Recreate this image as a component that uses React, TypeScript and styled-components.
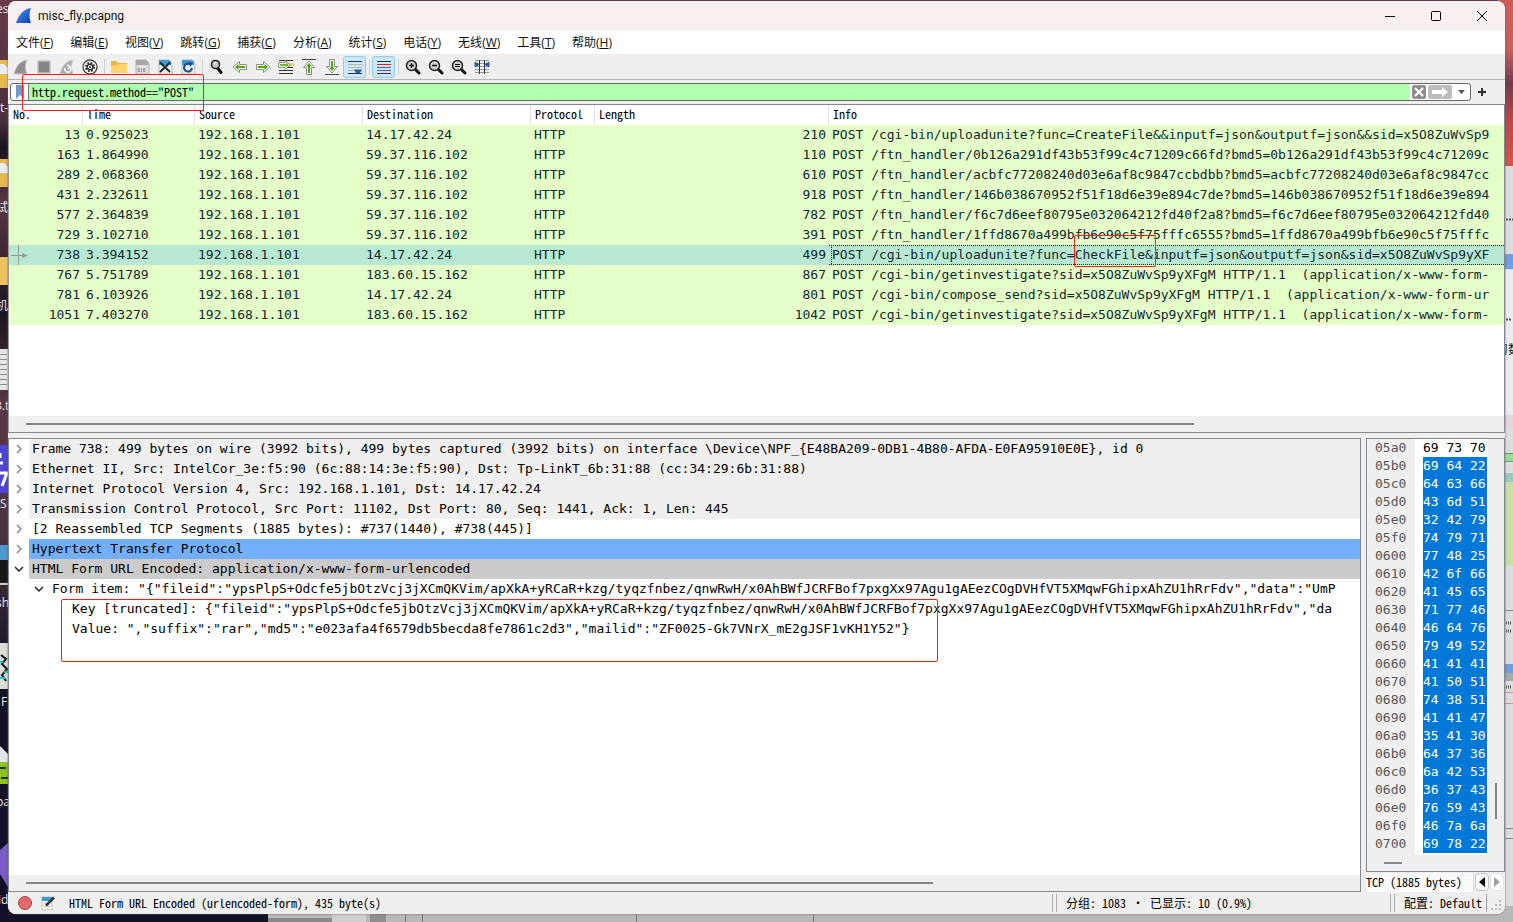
import React from "react";
import styled, { createGlobalStyle, css } from "styled-components";

const MONO = `"DejaVu Sans Mono", "Liberation Mono", monospace`;
const SMALL = `"Noto Sans Mono CJK SC", "Liberation Mono", "Noto Sans CJK SC", monospace`;
const UI = `"Open Sans", "Noto Sans CJK SC", sans-serif`;
const EDGE = "#828790";

const Global = createGlobalStyle`
  * { box-sizing: border-box; }
  body { margin: 0; background: #20182c; overflow: hidden; }
  button { font: inherit; color: inherit; background: none; border: 0; padding: 0; margin: 0; }
`;

const Desktop = styled.div`
  position: relative;
  display: flex;
  height: 100vh;
  padding: 1px 8px 8px;
  overflow: hidden;
  background: #5b3040;
`;
const LeftWallpaper = styled.svg`
  position: absolute;
  left: 0;
  top: 0;
`;
const RightWallpaper = styled.svg`
  position: absolute;
  right: 0;
  top: 0;
`;
const BottomWallpaper = styled.svg`
  position: absolute;
  left: 16px;
  bottom: 0;
`;

const Window = styled.main`
  position: relative;
  flex: 1;
  min-width: 0;
  display: flex;
  flex-direction: column;
  overflow: hidden;
  border-radius: 8px;
  background: #efefef;
  box-shadow: 0 0 2px #555;
`;

const TitleBar = styled.header`
  display: flex;
  align-items: center;
  height: 30px;
  flex: none;
  padding-left: 8px;
  background: #f8efef;
  font: 12px/16px Roboto, sans-serif;
  color: #111;
`;
const WindowTitle = styled.h1`
  flex: 1;
  margin: 0 0 0 6px;
  font: inherit;
`;
const CaptionButton = styled.button`
  display: grid;
  place-items: center;
  width: 46px;
  height: 30px;
`;

const MenuBar = styled.nav`
  display: flex;
  align-items: center;
  flex: none;
  gap: 17px;
  height: 24px;
  padding: 0 8px;
  background: #fff;
  border-bottom: 1px solid #ececec;
  font: 12px/18px ${UI};
  color: #111;
`;
const MenuButton = styled.button`
  white-space: nowrap;
`;

const ToolBar = styled.div`
  display: flex;
  align-items: center;
  flex: none;
  height: 25px;
  padding-left: 1px;
  border-bottom: 1px solid #b4b4b4;
`;
const ToolButton = styled.button<{ $on?: boolean }>`
  display: grid;
  place-items: center;
  width: 23px;
  height: 22px;
  border-radius: 3px;
  ${(p) => p.$on && css`
    background: #cce8ff;
    border: 1px solid #90c8f6;
  `}
`;
const ToolSeparator = styled.span`
  width: 6px;
  height: 16px;
  background: linear-gradient(#d0d0d0, #d0d0d0) center / 1px 100% no-repeat;
`;

const FilterBar = styled.form`
  position: relative;
  display: flex;
  align-items: center;
  flex: none;
  height: 24px;
  margin: 0;
  padding: 0 18px 0 2px;
  gap: 6px;
  font: 12px/16px ${SMALL};
`;
const FilterBox = styled.div`
  display: flex;
  flex: 1;
  align-items: center;
  height: 18px;
  border: 1px solid #666;
  border-radius: 3px;
  background: #fff;
  overflow: hidden;
`;
const BookmarkButton = styled.button`
  display: grid;
  place-items: center;
  width: 18px;
  height: 16px;
  border-right: 1px solid #777;
`;
const FilterInput = styled.input`
  flex: 1;
  min-width: 0;
  height: 16px;
  padding: 0 3px 2px;
  border: 0;
  outline: 0;
  background: #afffaf;
  font: 12px/14px ${SMALL};
  color: #000;
`;
const FilterAction = styled.button<{ $width: number; $fill?: string }>`
  display: grid;
  place-items: center;
  width: ${(p) => p.$width}px;
  height: 14px;
  margin-left: 2px;
  border-radius: 2px;
  background: ${(p) => p.$fill || "transparent"};
`;
const AddButton = styled.button`
  display: grid;
  place-items: center;
  width: 10px;
  height: 16px;
`;

const Panel = styled.section`
  position: relative;
  display: flex;
  flex-direction: column;
  min-width: 0;
  min-height: 0;
  border: 1px solid ${EDGE};
  background: #fff;
`;
const PacketPanel = styled(Panel)`
  flex: 328 1 0;
  border-left-color: #999;
`;
const PacketScroll = styled.div`
  flex: 1;
  min-height: 0;
  overflow: hidden;
`;
const PacketTable = styled.table`
  width: 100%;
  table-layout: fixed;
  border-collapse: separate;
  border-spacing: 0;
  font: 13px/19px ${MONO};
  color: #12272e;
`;
const HeaderCell = styled.th<{ $last?: boolean }>`
  height: 20px;
  padding: 0 4px;
  text-align: left;
  vertical-align: top;
  font: 12px/18px ${SMALL};
  color: #000;
  border-right: 1px solid ${(p) => (p.$last ? "#fff" : "#e2e2e2")};
`;
const PacketRow = styled.tr<{ $selected?: boolean }>`
  background: ${(p) => (p.$selected ? "#b7e8d1" : "#e4ffc7")};
`;
const Cell = styled.td<{ $right?: boolean; $focus?: boolean }>`
  position: relative;
  height: 20px;
  padding: 0 3px;
  overflow: hidden;
  vertical-align: top;
  white-space: pre;
  text-align: ${(p) => (p.$right ? "right" : "left")};
  ${(p) => p.$focus && css`
    background: repeating-linear-gradient(90deg, #222 0 1px, transparent 1px 2px) 0 0 / 100% 1px no-repeat,
      repeating-linear-gradient(90deg, #222 0 1px, transparent 1px 2px) 0 19px / 100% 1px no-repeat,
      repeating-linear-gradient(#222 0 1px, transparent 1px 2px) 2px 0 / 1px 100% no-repeat;
  `}
`;
const RelationMark = styled.svg`
  position: absolute;
  left: 0;
  top: 0;
`;

const HorizontalScroll = styled.div`
  display: flex;
  align-items: center;
  flex: none;
  height: 16px;
  padding-left: 17px;
  background: #efefef;
`;
const Thumb = styled.span<{ $share: string }>`
  width: ${(p) => p.$share};
  height: 2px;
  background: #868686;
`;

const LowerArea = styled.div`
  display: flex;
  flex: 455 1 0;
  min-height: 0;
  gap: 5px;
  margin-top: 5px;
`;
const DetailPanel = styled(Panel)`
  flex: 1;
`;
const Tree = styled.ul`
  flex: 1;
  min-height: 0;
  margin: 0;
  padding: 0;
  list-style: none;
  overflow: hidden;
  font: 13px/20px ${MONO};
  color: #000;
`;
const TreeRow = styled.li<{ $depth: number }>`
  display: flex;
  height: 20px;
  padding-left: ${(p) => p.$depth * 20}px;
`;
const Expander = styled.button`
  display: grid;
  place-items: center;
  flex: none;
  width: 20px;
  height: 20px;
`;
const TreeText = styled.span<{ $fill?: string }>`
  flex: 1;
  min-width: 0;
  padding-left: 3px;
  overflow: hidden;
  white-space: pre;
  background: ${(p) => p.$fill || "transparent"};
`;

const SideColumn = styled.div`
  display: flex;
  flex-direction: column;
  width: 139px;
  flex: none;
`;
const HexPanel = styled(Panel)`
  flex: 1;
  background: #efefef;
`;
const HexBody = styled.div`
  display: flex;
  flex: 1;
  min-height: 0;
  overflow: hidden;
  font: 13px/18px ${MONO};
`;
const HexOffsets = styled.div`
  width: 48px;
  padding-left: 8px;
  color: #555;
`;
const HexBytes = styled.div`
  width: 73px;
  height: 416px;
  padding-left: 8px;
  background: #fff;
  overflow: hidden;
`;
const HexLine = styled.div<{ $selected?: boolean }>`
  width: 64px;
  height: 18px;
  white-space: pre;
  color: ${(p) => (p.$selected ? "#fff" : "#000")};
  background: ${(p) => (p.$selected ? "#0078d7" : "transparent")};
`;
const VerticalScroll = styled.div`
  display: flex;
  flex: 1;
  justify-content: center;
  align-items: flex-end;
  padding-bottom: 36px;
`;
const VerticalThumb = styled.span`
  width: 2px;
  height: 36px;
  background: #868686;
`;
const SourceTabs = styled.div`
  display: flex;
  align-items: center;
  height: 20px;
  font: 12px/18px ${SMALL};
`;
const SourceTab = styled.button`
  width: 108px;
  height: 19px;
  background: #f9f9f9;
  border-right: 1px solid #ddd;
  text-align: left;
  white-space: pre;
`;
const TabArrow = styled.button<{ $dim?: boolean }>`
  display: grid;
  place-items: center;
  width: 14px;
  height: 18px;
  margin-left: 1px;
  border: 1px solid ${(p) => (p.$dim ? "#e2e2e2" : "#c4c4c4")};
  border-radius: 4px;
  background: #fcfcfc;
  color: ${(p) => (p.$dim ? "#a0a0a0" : "#000")};
`;

const StatusBar = styled.footer`
  display: flex;
  align-items: center;
  flex: none;
  height: 22px;
  padding: 0 1px 0 9px;
  background: #efefef;
  font: 12px/18px ${SMALL};
  color: #000;
`;
const StatusButton = styled.button`
  display: grid;
  place-items: center;
  width: 16px;
  height: 18px;
  margin-right: 7px;
`;
const StatusText = styled.span`
  flex: 1;
  padding-left: 6px;
`;
const StatusBlock = styled.span<{ $width: number }>`
  width: ${(p) => p.$width}px;
  padding-left: 9px;
  border-left: 1px solid #aaa;
  margin-left: 3px;
  white-space: pre;
`;
const StatusRule = styled.span`
  width: 1px;
  height: 18px;
  background: #aaa;
`;

const Highlight = styled.span<{ $x: number; $y: number; $w: number; $h: number }>`
  position: absolute;
  z-index: 2;
  left: ${(p) => p.$x}px;
  top: ${(p) => p.$y}px;
  width: ${(p) => p.$w}px;
  height: ${(p) => p.$h}px;
  border: 1px solid #ff1e12;
  border-radius: 2px;
  pointer-events: none;
`;

const Icon = ({ children, size = 16 }: { children: React.ReactNode; size?: number }) => (
  <svg width={size} height={size} viewBox="0 0 16 16" fill="none" aria-hidden="true">{children}</svg>
);

const FIN = "M1 15 C3 7 7 2 14 1 C12 6 12 10 14 15 Z";

const GreenArrow = ({ turn = 0 }: { turn?: number }) => (
  <g transform={`rotate(${turn} 8 8)`}>
    <path d="M1.500 5.500 H8.500 V2.500 L15 8 L8.500 13.500 V10.500 H1.500 Z" fill="#fff" stroke="#8c8c8c" strokeLinejoin="round" />
    <path d="M3 7 H9.500 V5 L13 8 L9.500 11 V9 H3 Z" fill="#4ea80c" />
  </g>
);
const Page = () => (
  <>
    <path d="M2 1 H12 L15 4 V15 H2 Z" fill="#e9ece6" stroke="#b9bdb5" />
    <path d="M2 1 H12 L14 3 V6 H2 Z" fill="#3b9bd4" />
  </>
);
const Lens = ({ children }: { children: React.ReactNode }) => (
  <>
    <path d="M10.500 10.500 L14 14" stroke="#111" strokeWidth="3" strokeLinecap="round" />
    <circle cx="6.500" cy="6.500" r="5" fill="#cfcfcf" stroke="#222" strokeWidth="1.500" />
    {children}
  </>
);

const toolGroups: { label: string; on?: boolean; art: React.ReactNode }[][] = [
  [
    { label: "开始捕获", art: <path d={FIN} fill="#8f8f8f" stroke="#c9c9c9" /> },
    { label: "停止捕获", art: <rect x="2" y="2" width="12" height="12" fill="#848484" stroke="#c2c2c2" strokeWidth="1.500" /> },
    { label: "重新捕获", art: <><path d={FIN} fill="#aaa" stroke="#ccc" /><path d="M6 9 a3 3 0 1 0 5 -1 M8 6 L11 7.500 L9 10" stroke="#f4f4f4" strokeWidth="1.600" /></> },
    { label: "捕获选项", art: <><circle cx="8" cy="8" r="7" fill="#fff" stroke="#444" strokeWidth="1.300" /><circle cx="8" cy="8" r="3.500" fill="#333" /><circle cx="8" cy="8" r="4.200" stroke="#333" strokeWidth="1.800" strokeDasharray="1.900 1.400" /><circle cx="8" cy="8" r="2.100" fill="#fff" /><circle cx="8" cy="8" r="1.100" fill="#333" /></> },
  ],
  [
    { label: "打开", art: <><path d="M0 14 V2 H5 L7 4 H16 V14 Z" fill="#efb73e" /><path d="M0 14 V6.500 H6 L8 5 H16 V14 Z" fill="#ffd56b" /></> },
    { label: "保存", art: <><path d="M2 1 H12 L15 4 V15 H2 Z" fill="#e0e0e0" stroke="#b0b0b0" /><path d="M2 1 H12 L14 3 V6 H2 Z" fill="#a6a6a6" /><path d="M4 9.500 h1.500 v3 h-1.500 Z M7.500 9 V13 M9.500 9.500 h1.500 v3 h-1.500 Z" stroke="#999" /></> },
    { label: "关闭文件", art: <><Page /><path d="M3 3.500 L13 13 M13 3.500 L3 13" stroke="#202a30" strokeWidth="2" /></> },
    { label: "重新加载", art: <><Page /><path d="M12 9 A4 4 0 1 1 10 5" stroke="#174b8c" strokeWidth="2" /><path d="M8.500 2.500 L13 4 L10 8 Z" fill="#174b8c" /></> },
  ],
  [
    { label: "查找分组", art: <><path d="M8.500 9 L12 13.500" stroke="#111" strokeWidth="3" strokeLinecap="round" /><circle cx="6.500" cy="5.500" r="4" fill="#c9c9c9" stroke="#222" strokeWidth="1.600" /><path d="M5 4.500 L7 3.500" stroke="#fff" /></> },
    { label: "上一分组", art: <GreenArrow turn={180} /> },
    { label: "下一分组", art: <GreenArrow /> },
    { label: "转到分组", art: <><path d="M1 1.500 H15 M1 11.500 H15 M1 14.500 H15 M8 8.500 H15" stroke="#333" /><path d="M11 5.500 H16" stroke="#f7d64d" strokeWidth="3" /><path d="M.5 3.500 H7 V1.500 L12.500 6 L7 10.500 V8.500 H.5 Z" fill="#fff" stroke="#8a8a8a" /><path d="M2 5 H8 V3.500 L11 6 L8 8.500 V7 H2 Z" fill="#6dba2c" /></> },
    { label: "首个分组", art: <><path d="M1 .5 H15" stroke="#444" /><g transform="translate(0 1)"><GreenArrow turn={-90} /></g></> },
    { label: "最后分组", art: <><path d="M1 15.500 H15" stroke="#444" /><g transform="translate(0 -1)"><GreenArrow turn={90} /></g></> },
    { label: "自动滚动", on: true, art: <><path d="M1 2.500 H15 M1 14.500 H15" stroke="#333" /><path d="M1 5.500 H15 M1 8.500 H15 M1 11.500 H8" stroke="#b9b9a8" /><path d="M7 10.500 H15 L13 14 H9 Z" fill="#2d5e9e" /></> },
  ],
  [
    { label: "着色", on: true, art: <><path d="M1 2.500 H15 M1 14.500 H15" stroke="#333" /><path d="M1 5.500 H15" stroke="#f01810" /><path d="M1 8.500 H15" stroke="#3465a4" /><path d="M1 11.500 H15" stroke="#75507b" /></> },
  ],
  [
    { label: "放大", art: <Lens><path d="M4 6.500 H9 M6.500 4 V9" stroke="#111" strokeWidth="1.300" /></Lens> },
    { label: "缩小", art: <Lens><path d="M4 6.500 H9" stroke="#111" strokeWidth="1.300" /></Lens> },
    { label: "正常大小", art: <Lens><path d="M4 5.500 H9 M4 7.500 H9" stroke="#111" /></Lens> },
    { label: "调整列宽", art: <><path d="M1 1.500 H15 M1 4.500 H15 M1 7.500 H15 M1 10.500 H15 M1 13.500 H15" stroke="#9a9a9a" /><path d="M5.500 1 V15 M10.500 1 V15" stroke="#333" /><path d="M1 3 L5 5.500 L1 8 Z M15 3 L11 5.500 L15 8 Z" fill="#2d5e9e" stroke="#2d5e9e" /></> },
  ],
];

const menus: [string, string][] = [
  ["文件", "F"], ["编辑", "E"], ["视图", "V"], ["跳转", "G"], ["捕获", "C"], ["分析", "A"],
  ["统计", "S"], ["电话", "Y"], ["无线", "W"], ["工具", "T"], ["帮助", "H"],
];

const columns: [string, number | undefined][] = [
  ["No.", 74], ["Time", 112], ["Source", 168], ["Destination", 168], ["Protocol", 64], ["Length", 234], ["Info", undefined],
];

const packets: [number, string, string, number, string][] = [
  [13, "0.925023", "14.17.42.24", 210, "POST /cgi-bin/uploadunite?func=CreateFile&&inputf=json&outputf=json&&sid=x5O8ZuWvSp9"],
  [163, "1.864990", "59.37.116.102", 110, "POST /ftn_handler/0b126a291df43b53f99c4c71209c66fd?bmd5=0b126a291df43b53f99c4c71209c"],
  [289, "2.068360", "59.37.116.102", 610, "POST /ftn_handler/acbfc77208240d03e6af8c9847ccbdbb?bmd5=acbfc77208240d03e6af8c9847cc"],
  [431, "2.232611", "59.37.116.102", 918, "POST /ftn_handler/146b038670952f51f18d6e39e894c7de?bmd5=146b038670952f51f18d6e39e894"],
  [577, "2.364839", "59.37.116.102", 782, "POST /ftn_handler/f6c7d6eef80795e032064212fd40f2a8?bmd5=f6c7d6eef80795e032064212fd40"],
  [729, "3.102710", "59.37.116.102", 391, "POST /ftn_handler/1ffd8670a499bfb6e90c5f75fffc6555?bmd5=1ffd8670a499bfb6e90c5f75fffc"],
  [738, "3.394152", "14.17.42.24", 499, "POST /cgi-bin/uploadunite?func=CheckFile&inputf=json&outputf=json&sid=x5O8ZuWvSp9yXF"],
  [767, "5.751789", "183.60.15.162", 867, "POST /cgi-bin/getinvestigate?sid=x5O8ZuWvSp9yXFgM HTTP/1.1  (application/x-www-form-"],
  [781, "6.103926", "14.17.42.24", 801, "POST /cgi-bin/compose_send?sid=x5O8ZuWvSp9yXFgM HTTP/1.1  (application/x-www-form-ur"],
  [1051, "7.403270", "183.60.15.162", 1042, "POST /cgi-bin/getinvestigate?sid=x5O8ZuWvSp9yXFgM HTTP/1.1  (application/x-www-form-"],
];

const FILE_ID = `{"fileid":"ypsPlpS+Odcfe5jbOtzVcj3jXCmQKVim/apXkA+yRCaR+kzg/tyqzfnbez/qnwRwH/x0AhBWfJCRFBof7pxgXx97Agu1gAEezCOgDVHfVT5XMqwFGhipxAhZU1hRrFdv"`;

const details: { depth: number; open?: boolean; leaf?: boolean; fill?: string; text: string }[] = [
  { depth: 0, fill: "#efefef", text: "Frame 738: 499 bytes on wire (3992 bits), 499 bytes captured (3992 bits) on interface \\Device\\NPF_{E48BA209-0DB1-4B80-AFDA-E0FA95910E0E}, id 0" },
  { depth: 0, fill: "#efefef", text: "Ethernet II, Src: IntelCor_3e:f5:90 (6c:88:14:3e:f5:90), Dst: Tp-LinkT_6b:31:88 (cc:34:29:6b:31:88)" },
  { depth: 0, fill: "#efefef", text: "Internet Protocol Version 4, Src: 192.168.1.101, Dst: 14.17.42.24" },
  { depth: 0, fill: "#efefef", text: "Transmission Control Protocol, Src Port: 11102, Dst Port: 80, Seq: 1441, Ack: 1, Len: 445" },
  { depth: 0, text: "[2 Reassembled TCP Segments (1885 bytes): #737(1440), #738(445)]" },
  { depth: 0, fill: "#73affa", text: "Hypertext Transfer Protocol" },
  { depth: 0, open: true, fill: "#cbcbcb", text: "HTML Form URL Encoded: application/x-www-form-urlencoded" },
  { depth: 1, open: true, text: `Form item: "${FILE_ID},"data":"UmP` },
  { depth: 2, leaf: true, text: `Key [truncated]: ${FILE_ID},"da` },
  { depth: 2, leaf: true, text: `Value: ","suffix":"rar","md5":"e023afa4f6579db5becda8fe7861c2d3","mailid":"ZF0025-Gk7VNrX_mE2gJSF1vKH1Y52"}` },
];

const hexRows = [
  "69 73 70", "69 64 22", "64 63 66", "43 6d 51", "32 42 79", "74 79 71", "77 48 25", "42 6f 66",
  "41 45 65", "71 77 46", "46 64 76", "79 49 52", "41 41 41", "41 50 51", "74 38 51", "41 41 47",
  "35 41 30", "64 37 36", "6a 42 53", "36 37 43", "76 59 43", "46 7a 6a", "69 78 22",
];
const offsetLabel = (i: number) => (0x5a0 + i * 16).toString(16).padStart(4, "0");

const DesktopLabel = styled.text`
  font: 12px ${UI};
  fill: #e8e8ee;
`;

const Wallpaper = () => (
  <>
    <LeftWallpaper width="16" height="922" aria-hidden="true">
      <defs>
        <linearGradient id="dusk" x1="0" y1="0" x2="0" y2="1">
          <stop offset="0" stopColor="#6a3a4c" />
          <stop offset=".13" stopColor="#4b2f40" />
          <stop offset=".16" stopColor="#1c1420" />
          <stop offset=".22" stopColor="#5b3747" />
          <stop offset=".34" stopColor="#1c1420" />
          <stop offset=".44" stopColor="#5b3747" />
          <stop offset=".58" stopColor="#4b3444" />
          <stop offset=".74" stopColor="#141222" />
          <stop offset="1" stopColor="#12102a" />
        </linearGradient>
      </defs>
      <rect width="16" height="922" fill="url(#dusk)" />
      <rect y="60" width="8" height="28" fill="#e6b94f" />
      <path d="M0 64 h4 l4 4 v6 h-8 Z" fill="#e9eef2" />
      <rect y="159" width="8" height="28" fill="#e6b94f" />
      <path d="M0 163 h4 l4 4 v6 h-8 Z" fill="#e9eef2" />
      <rect y="257" width="8" height="28" fill="#ecc35e" />
      <rect y="349" width="8" height="41" fill="#e4e4e4" />
      <path d="M0 354.500 h7 M0 359.500 h7 M0 364.500 h7 M0 369.500 h7 M0 374.500 h7 M0 379.500 h7 M0 384.500 h7" stroke="#8c8c8c" />
      <rect y="445" width="8" height="48" fill="#4f46d8" />
      <path d="M0 453 v5 M0 463 h3 M0 473 h7 l-5 13" stroke="#fff" strokeWidth="3" fill="none" />
      <rect y="545" width="8" height="15" fill="#4f97cf" />
      <rect y="560" width="8" height="22" fill="#17171a" />
      <rect y="583" width="8" height="2" fill="#c9c9c9" />
      <rect y="643" width="8" height="46" fill="#dcdcd6" />
      <path d="M1 655 l5 4 l-4 5 l5 5 l-5 6 l4 6" stroke="#111" strokeWidth="2" fill="none" />
      <path d="M0 662 h3 M4 672 h4 M0 678 h5" stroke="#15c7cf" strokeWidth="2" />
      <path d="M0 746 l8 8 v8 h-8 Z" fill="#dfe5ea" />
      <rect y="762" width="8" height="22" fill="#8fc31f" />
      <path d="M0 768 h6 M1 778 h7" stroke="#15370c" strokeWidth="2" />
      <path d="M0 850 L8 843 V887 L0 874 Z" fill="#7a5bc7" />
      <DesktopLabel x="-4" y="13">es</DesktopLabel>
      <DesktopLabel x="0" y="112">t-</DesktopLabel>
      <DesktopLabel x="-4" y="212">试</DesktopLabel>
      <DesktopLabel x="-4" y="310">机</DesktopLabel>
      <DesktopLabel x="-5" y="410">3.t</DesktopLabel>
      <DesktopLabel x="0" y="508">S</DesktopLabel>
      <DesktopLabel x="-4" y="607">sh</DesktopLabel>
      <DesktopLabel x="1" y="706">F.</DesktopLabel>
      <DesktopLabel x="-4" y="806">pa</DesktopLabel>
      <DesktopLabel x="-2" y="904">id</DesktopLabel>
    </LeftWallpaper>
    <RightWallpaper width="16" height="922" aria-hidden="true">
      <defs>
        <linearGradient id="sunset" x1="0" y1="0" x2="0" y2="1">
          <stop offset="0" stopColor="#cf5a58" />
          <stop offset=".3" stopColor="#c9605f" />
          <stop offset=".5" stopColor="#6e3c50" />
          <stop offset=".7" stopColor="#b5484a" />
          <stop offset="1" stopColor="#d4574c" />
        </linearGradient>
      </defs>
      <rect width="16" height="166" fill="url(#sunset)" />
      <rect y="166" width="16" height="756" fill="#dcdcdc" />
      <rect y="254" width="16" height="15" fill="#6f9fdc" />
      <rect y="270" width="16" height="145" fill="#ececec" />
      <rect y="415" width="16" height="14" fill="#e2d6d8" />
      <path d="M0 453.500 h16 M0 461.500 h16 M0 610.500 h16 M0 828.500 h16 M0 838.500 h16" stroke="#888" />
      <rect y="454" width="16" height="7" fill="#93e093" />
      <rect y="473" width="16" height="9" fill="#9dcab9" />
      <rect y="482" width="16" height="84" fill="#c8dfa8" />
      <rect y="664" width="16" height="9" fill="#6f9fdc" />
      <rect y="673" width="16" height="8" fill="#a8a8a8" />
      <path d="M8 692.500 h8 M8 703.500 h8" stroke="#e88" />
      <path d="M9 219.500 h2 M12 219.500 h4 M9 319.500 h5" stroke="#555" strokeWidth="2" strokeDasharray="2 1" />
      <path d="M9 623 h6 M9 631 h6 M9 687 h6" stroke="#555" strokeWidth="3" strokeDasharray="1 1" />
      <text x="-1" y="354" fontFamily="Noto Sans CJK SC" fontSize="12" fill="#222">习数</text>
    </RightWallpaper>
    <BottomWallpaper width="100%" height="16" aria-hidden="true">
      <rect width="100%" height="16" fill="#b8b8b8" />
      <rect width="252" height="16" fill="#101526" />
      <path d="M252 12 h64 v4 h-64 Z" fill="#8a8a8a" />
      <path d="M316 8 h34 v8 h-34 Z" fill="#cfcfcf" />
      <path d="M354 8 h16 v8 h-16 Z" fill="#8f8f8f" />
      <path d="M389.500 8 v8 M406.500 8 v8 M620.500 8 v8 M797.500 8 v8" stroke="#777" />
    </BottomWallpaper>
  </>
);

export default function App() {
  return (
    <>
      <Global />
      <Desktop>
        <Wallpaper />
        <Window>
          <TitleBar>
            <svg width="16" height="16" viewBox="0 0 16 16" aria-hidden="true">
              <defs>
                <linearGradient id="fin" x1="0" y1="0" x2="1" y2="1">
                  <stop offset="0" stopColor="#4f97f0" />
                  <stop offset="1" stopColor="#0a3fb4" />
                </linearGradient>
              </defs>
              <path d="M0 15 C3 6 8 1 15 0 C13 5 13 10 15 15 Z" fill="url(#fin)" />
            </svg>
            <WindowTitle>misc_fly.pcapng</WindowTitle>
            <CaptionButton aria-label="最小化"><svg width="10" height="10" fill="none" stroke="#000"><path d="M0 5.500 H10" /></svg></CaptionButton>
            <CaptionButton aria-label="最大化"><svg width="10" height="10" fill="none" stroke="#000"><rect x=".5" y=".5" width="9" height="9" rx="1" /></svg></CaptionButton>
            <CaptionButton aria-label="关闭"><svg width="10" height="10" fill="none" stroke="#000"><path d="M0 0 L10 10 M10 0 L0 10" /></svg></CaptionButton>
          </TitleBar>

          <MenuBar>
            {menus.map(([name, key]) => (
              <MenuButton key={key}>{name}(<u>{key}</u>)</MenuButton>
            ))}
          </MenuBar>

          <ToolBar>
            {toolGroups.map((group, i) => (
              <React.Fragment key={i}>
                {i > 0 && <ToolSeparator />}
                {group.map((tool) => (
                  <ToolButton key={tool.label} aria-label={tool.label} $on={tool.on}><Icon>{tool.art}</Icon></ToolButton>
                ))}
              </React.Fragment>
            ))}
          </ToolBar>

          <FilterBar onSubmit={(e) => e.preventDefault()}>
            <FilterBox>
              <BookmarkButton type="button" aria-label="书签">
                <svg width="8" height="14"><path d="M0 0 H8 V14 L4 10 L0 14 Z" fill="#6f9bd1" /></svg>
              </BookmarkButton>
              <FilterInput aria-label="显示过滤器" defaultValue={'http.request.method=="POST"'} />
              <FilterAction type="button" aria-label="清除" $width={14} $fill="#8f8f8f">
                <svg width="10" height="10" stroke="#fff" strokeWidth="2"><path d="M1 1 L9 9 M9 1 L1 9" /></svg>
              </FilterAction>
              <FilterAction type="submit" aria-label="应用" $width={24} $fill="#bcbcbc">
                <svg width="16" height="10"><path d="M0 3 H10 V0 L16 5 L10 10 V7 H0 Z" fill="#fff" /></svg>
              </FilterAction>
              <FilterAction type="button" aria-label="历史" $width={16}>
                <svg width="8" height="4"><path d="M0 0 H7 L3.500 4 Z" fill="#555" /></svg>
              </FilterAction>
            </FilterBox>
            <AddButton type="button" aria-label="添加">
              <svg width="8" height="8" stroke="#333" strokeWidth="2"><path d="M4 0 V8 M0 4 H8" /></svg>
            </AddButton>
            <Highlight $x={14} $y={-6} $w={182} $h={37} />
          </FilterBar>

          <PacketPanel>
            <PacketScroll>
              <PacketTable>
                <colgroup>
                  {columns.map(([name, width]) => <col key={name} width={width} />)}
                </colgroup>
                <thead>
                  <tr>
                    {columns.map(([name, width]) => <HeaderCell key={name} $last={!width}>{name}</HeaderCell>)}
                  </tr>
                </thead>
                <tbody>
                  {packets.map(([no, time, dest, length, info]) => (
                    <PacketRow key={no} $selected={no === 738}>
                      <Cell $right>
                        {no === 738 && (
                          <RelationMark width="20" height="20" aria-hidden="true">
                            <path d="M9.500 0 V20 M2 10.500 H14" stroke="#8b9c97" />
                            <path d="M13 8 L19 10.500 L13 13 Z" fill="#8b9c97" />
                          </RelationMark>
                        )}
                        {no}
                      </Cell>
                      <Cell>{time}</Cell>
                      <Cell>192.168.1.101</Cell>
                      <Cell>{dest}</Cell>
                      <Cell>HTTP</Cell>
                      <Cell $right>{length}</Cell>
                      <Cell $focus={no === 738}>{info}</Cell>
                    </PacketRow>
                  ))}
                </tbody>
              </PacketTable>
            </PacketScroll>
            <HorizontalScroll><Thumb $share="79%" /></HorizontalScroll>
            <Highlight $x={1065} $y={130} $w={82} $h={32} />
          </PacketPanel>

          <LowerArea>
            <DetailPanel>
              <Tree>
                {details.map((row) => (
                  <TreeRow key={row.text} $depth={row.depth}>
                    <Expander as={row.leaf ? "span" : "button"} aria-label={row.leaf ? undefined : "展开"}>
                      {!row.leaf && (
                        <svg width="10" height="10" fill="none" stroke={row.open ? "#222" : "#888"} strokeWidth="1.500">
                          <path d={row.open ? "M1 3 L5 7 L9 3" : "M3 1 L7 5 L3 9"} />
                        </svg>
                      )}
                    </Expander>
                    <TreeText $fill={row.fill}>{row.text}</TreeText>
                  </TreeRow>
                ))}
              </Tree>
              <HorizontalScroll><Thumb $share="68%" /></HorizontalScroll>
              <Highlight $x={52} $y={160} $w={877} $h={63} />
            </DetailPanel>

            <SideColumn>
              <HexPanel>
                <HexBody>
                  <HexOffsets>{hexRows.map((_, i) => <div key={i}>{offsetLabel(i)}</div>)}</HexOffsets>
                  <HexBytes>{hexRows.map((bytes, i) => <HexLine key={i} $selected={i > 0}>{bytes}</HexLine>)}</HexBytes>
                  <VerticalScroll><VerticalThumb /></VerticalScroll>
                </HexBody>
                <HorizontalScroll><Thumb $share="18px" /></HorizontalScroll>
              </HexPanel>
              <SourceTabs>
                <SourceTab>TCP (1885 bytes)</SourceTab>
                <TabArrow aria-label="向左"><svg width="6" height="10"><path d="M6 0 V10 L0 5 Z" fill="currentColor" /></svg></TabArrow>
                <TabArrow aria-label="向右" $dim><svg width="6" height="10"><path d="M0 0 V10 L6 5 Z" fill="currentColor" /></svg></TabArrow>
              </SourceTabs>
            </SideColumn>
          </LowerArea>

          <StatusBar>
            <StatusButton aria-label="专家信息">
              <svg width="16" height="16"><circle cx="8" cy="8" r="6.500" fill="#e8666a" stroke="#8e4a4c" /></svg>
            </StatusButton>
            <StatusButton aria-label="注释">
              <Icon>
                <path d="M2 2 H12 V15 H2 Z" fill="#f1f1ec" stroke="#c9c9c4" />
                <path d="M2 2 H12 V6 H2 Z" fill="#3b9bd4" />
                <path d="M4 8.500 H8 M4 11.500 H10" stroke="#c9c9c4" />
                <path d="M6 10.500 L14 2.500" stroke="#333" strokeWidth="2.500" />
              </Icon>
            </StatusButton>
            <StatusText>HTML Form URL Encoded (urlencoded-form), 435 byte(s)</StatusText>
            <StatusRule />
            <StatusBlock $width={334}>分组: 1083 · 已显示: 10 (0.9%)</StatusBlock>
            <StatusRule />
            <StatusBlock $width={92}>配置: Default</StatusBlock>
            <StatusRule />
            <svg width="17" height="16" aria-hidden="true">
              <path d="M12 5 h2 v2 h-2 Z M8 9 h2 v2 h-2 Z M12 9 h2 v2 h-2 Z M4 13 h2 v2 h-2 Z M8 13 h2 v2 h-2 Z M12 13 h2 v2 h-2 Z" fill="#bbb" />
            </svg>
          </StatusBar>
        </Window>
      </Desktop>
    </>
  );
}
